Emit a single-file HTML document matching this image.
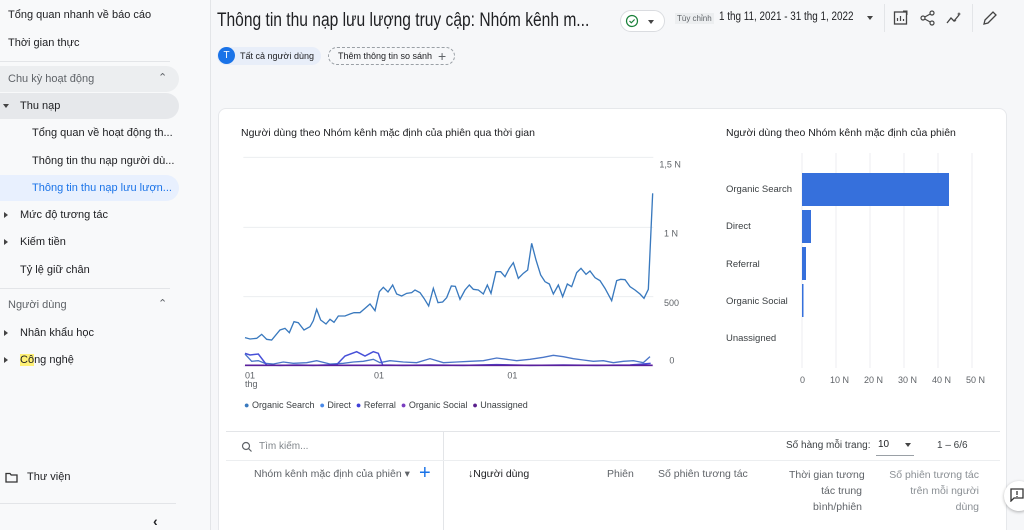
<!DOCTYPE html>
<html><head><meta charset="utf-8"><style>
*{margin:0;padding:0;box-sizing:border-box}
html,body{width:1024px;height:530px;overflow:hidden}
body{background:#f6f7f9;font-family:"Liberation Sans","Noto Sans CJK SC",sans-serif;color:#202124;position:relative}
.abs{position:absolute;white-space:nowrap}
.sb{position:absolute;left:0;top:0;width:211px;height:530px;background:#f8f9fa;border-right:1px solid #e3e5e8}
.si{position:absolute;font-size:11px;color:#202124;white-space:nowrap}
.hl{position:absolute;left:0;width:179px;height:26px;border-radius:0 13px 13px 0}
.tri{position:absolute;width:0;height:0;border-left:3px solid transparent;border-right:3px solid transparent;border-top:4px solid #444}
.tri2{position:absolute;width:0;height:0;border-top:3px solid transparent;border-bottom:3px solid transparent;border-left:4px solid #444}
.card{position:absolute;left:218px;top:108px;width:789px;height:440px;background:#fff;border:1px solid #e6e8eb;border-radius:8px}
.t{font-size:10px;color:#5f6368}
</style></head><body>
<div class="sb">
<div class="si" style="left:8px;top:9px">Tổng quan nhanh về báo cáo</div>
<div class="si" style="left:8px;top:37px">Thời gian thực</div>
<div style="position:absolute;left:0;top:61px;width:170px;border-top:1px solid #e3e5e8"></div>
<div class="hl" style="top:66px;background:#eceef0"></div>
<div class="si" style="left:8px;top:73px;color:#5f6368">Chu kỳ hoạt động</div>
<div class="si" style="left:158px;top:71px;color:#5f6368;font-size:11px">&#8963;</div>
<div class="hl" style="top:93px;background:#e6e8eb"></div>
<div class="tri" style="left:3px;top:104px"></div>
<div class="si" style="left:20px;top:100px">Thu nạp</div>
<div class="si" style="left:32px;top:127px">Tổng quan về hoạt động th...</div>
<div class="si" style="left:32px;top:155px">Thông tin thu nạp người dù...</div>
<div class="hl" style="top:175px;background:#e8f0fe"></div>
<div class="si" style="left:32px;top:182px;color:#1a73e8">Thông tin thu nạp lưu lượn...</div>
<div class="tri2" style="left:4px;top:212px"></div>
<div class="si" style="left:20px;top:209px">Mức độ tương tác</div>
<div class="tri2" style="left:4px;top:239px"></div>
<div class="si" style="left:20px;top:236px">Kiếm tiền</div>
<div class="si" style="left:20px;top:264px">Tỷ lệ giữ chân</div>
<div style="position:absolute;left:0;top:288px;width:170px;border-top:1px solid #e3e5e8"></div>
<div class="si" style="left:8px;top:299px;color:#5f6368">Người dùng</div>
<div class="si" style="left:158px;top:297px;color:#5f6368;font-size:11px">&#8963;</div>
<div class="tri2" style="left:4px;top:330px"></div>
<div class="si" style="left:20px;top:327px">Nhân khẩu học</div>
<div class="tri2" style="left:4px;top:357px"></div>
<div class="si" style="left:20px;top:354px"><span style="background:#fff176">Cô</span>ng nghệ</div>
<svg style="position:absolute;left:5px;top:472px" width="13" height="11"><path d="M1 1.5h4l1.2 1.5H12v7H1z" fill="none" stroke="#333" stroke-width="1.3"/></svg>
<div class="si" style="left:27px;top:471px">Thư viện</div>
<div style="position:absolute;left:0;top:503px;width:176px;border-top:1px solid #e3e5e8"></div>
<div class="si" style="left:153px;top:513px;font-size:14px;font-weight:bold">&lsaquo;</div>
</div>

<div class="abs" style="left:217px;top:10px;font-size:19px;color:#202124;transform:scaleX(0.82);transform-origin:0 0">Thông tin thu nạp lưu lượng truy cập: Nhóm kênh m...</div>
<div class="abs" style="left:620px;top:10px;width:45px;height:22px;border:1px solid #dadce0;border-radius:11px;background:#fff"></div>
<svg class="abs" style="left:625px;top:14px" width="14" height="14"><circle cx="7" cy="7" r="5.5" fill="none" stroke="#188038" stroke-width="1.2"/><path d="M4.5 7l1.8 1.8 3.3-3.3" fill="none" stroke="#188038" stroke-width="1.2"/></svg>
<div class="tri" style="left:648px;top:20px"></div>
<div class="abs" style="left:675px;top:13px;font-size:8px;color:#5f6368;background:#eceef0;padding:1px 2px">Tùy chỉnh</div>
<div class="abs" style="left:719px;top:11px;font-size:11.5px;transform:scaleX(0.86);transform-origin:0 0">1 thg 11, 2021 - 31 thg 1, 2022</div>
<div class="tri" style="left:867px;top:16px"></div>
<div style="position:absolute;left:884px;top:4px;height:28px;border-left:1px solid #e3e5e8"></div>
<svg class="abs" style="left:893px;top:10px" width="16" height="16"><rect x="1.5" y="2" width="12" height="12" fill="none" stroke="#444" stroke-width="1.3"/><path d="M4.5 11V8M7.5 11V6M10.5 11V9" stroke="#444" stroke-width="1.2"/><path d="M10 1l4 0 0 4" fill="none" stroke="#444" stroke-width="1"/></svg>
<svg class="abs" style="left:920px;top:10px" width="16" height="16"><circle cx="12" cy="3" r="2" fill="none" stroke="#444" stroke-width="1.2"/><circle cx="3" cy="8" r="2" fill="none" stroke="#444" stroke-width="1.2"/><circle cx="12" cy="13" r="2" fill="none" stroke="#444" stroke-width="1.2"/><path d="M4.8 7l5.4-3M4.8 9l5.4 3" stroke="#444" stroke-width="1.2"/></svg>
<svg class="abs" style="left:946px;top:10px" width="18" height="16"><path d="M1 13l4-5 3 3 5-6" fill="none" stroke="#444" stroke-width="1.3"/><path d="M13 2l.6 1.4 1.4.6-1.4.6-.6 1.4-.6-1.4-1.4-.6 1.4-.6z M9 9l.5 1 1 .5-1 .5-.5 1-.5-1-1-.5 1-.5z" fill="#444"/></svg>
<div style="position:absolute;left:972px;top:4px;height:28px;border-left:1px solid #e3e5e8"></div>
<svg class="abs" style="left:982px;top:10px" width="16" height="16"><path d="M2 14l1-4 8-8 3 3-8 8z" fill="none" stroke="#444" stroke-width="1.3"/></svg>

<div class="abs" style="left:217px;top:47px;width:104px;height:18px;background:#e8eef9;border-radius:9px"></div>
<div class="abs" style="left:218px;top:47px;width:17px;height:17px;border-radius:50%;background:#1a73e8;color:#fff;font-size:10px;text-align:center;line-height:17px">T</div>
<div class="abs" style="left:240px;top:51px;font-size:9px">Tất cả người dùng</div>
<div class="abs" style="left:328px;top:47px;width:127px;height:18px;border:1px dashed #9aa0a6;border-radius:9px"></div>
<div class="abs" style="left:338px;top:51px;font-size:9px">Thêm thông tin so sánh</div>
<div class="abs" style="left:438px;top:47px;font-size:14px;color:#5f6368;line-height:18px">+</div>

<div class="card"></div>
<div class="abs" style="left:241px;top:127px;font-size:10.5px">Người dùng theo Nhóm kênh mặc định của phiên qua thời gian</div>
<div class="abs" style="left:726px;top:127px;font-size:10.5px">Người dùng theo Nhóm kênh mặc định của phiên</div>

<svg style="position:absolute;left:230px;top:150px" width="460" height="230" viewBox="0 0 1380 690">
<g stroke="#eceef0" stroke-width="3"><line x1="40" y1="22" x2="1270" y2="22"/><line x1="40" y1="232" x2="1270" y2="232"/><line x1="40" y1="440" x2="1270" y2="440"/><line x1="40" y1="648" x2="1270" y2="648"/></g>
<g fill="#5f6368" font-family="Liberation Sans" font-size="27"><text x="1288" y="52">1,5 N</text><text x="1302" y="260">1 N</text><text x="1302" y="468">500</text><text x="1318" y="640">0</text></g>
<polyline fill="none" stroke="#4a76c8" stroke-width="4" points="45,612 65,634 85,632 105,640 130,642 160,636 190,640 230,638 260,632 300,642 340,640 370,636 400,634 430,628 450,638 480,632 520,636 560,638 600,626 640,638 680,636 720,634 760,632 800,624 830,628 860,632 900,628 940,622 970,616 1000,620 1030,626 1060,630 1090,634 1120,632 1150,638 1180,634 1210,632 1240,638 1260,620"/>
<polyline fill="none" stroke="#4750d8" stroke-width="4.5" points="45,610 60,615 85,612 110,645 150,646 200,645 250,646 320,644 345,618 380,605 405,618 430,605 445,610 458,645 520,646 600,645 700,646 800,644 900,646 1000,645 1100,646 1200,645 1262,640"/>
<polyline fill="none" stroke="#3979be" stroke-width="4" points="45,563 60,567 80,565 95,553 110,568 125,570 150,540 165,535 178,548 192,515 205,518 222,540 240,530 250,512 260,478 272,510 288,522 300,508 312,517 325,498 345,498 360,492 372,488 390,488 405,475 420,462 435,482 448,425 460,412 474,426 488,405 500,432 515,438 530,430 545,428 555,420 570,428 582,445 596,468 610,415 624,458 638,456 650,443 664,408 676,409 690,448 705,420 718,405 730,418 745,420 760,432 772,405 783,430 798,365 812,365 825,380 838,355 850,338 865,385 880,370 893,360 905,280 918,330 932,375 945,395 958,402 970,432 985,405 998,440 1012,402 1025,410 1040,368 1053,355 1068,373 1080,363 1095,383 1110,392 1125,415 1145,452 1160,392 1172,388 1185,389 1200,410 1215,420 1230,432 1242,445 1255,418 1268,130"/>
<line x1="45" y1="646" x2="1268" y2="646" stroke="#5a1f9c" stroke-width="5"/>
<g fill="#5f6368" font-family="Liberation Sans" font-size="27"><text x="45" y="685">01</text><text x="432" y="685">01</text><text x="832" y="685">01</text></g>
</svg>
<div class="abs t" style="left:245px;top:379px;font-size:9px">thg</div>

<div class="abs" style="left:244px;top:400px;font-size:9px;color:#3c4043">
<span style="color:#3979be">●</span> Organic Search &nbsp;<span style="color:#4a8ae8">●</span> Direct &nbsp;<span style="color:#4040d8">●</span> Referral &nbsp;<span style="color:#7a3ec0">●</span> Organic Social &nbsp;<span style="color:#5a1f8c">●</span> Unassigned</div>

<svg style="position:absolute;left:700px;top:140px" width="300" height="250">
<g stroke="#eceef0" stroke-width="1"><line x1="102" y1="13" x2="102" y2="228"/><line x1="136" y1="13" x2="136" y2="228"/><line x1="170" y1="13" x2="170" y2="228"/><line x1="204" y1="13" x2="204" y2="228"/><line x1="238" y1="13" x2="238" y2="228"/><line x1="272" y1="13" x2="272" y2="228"/></g>
<rect x="102" y="33" width="147" height="33" fill="#3670dc"/>
<rect x="102" y="70" width="9" height="33" fill="#3670dc"/>
<rect x="102" y="107" width="4" height="33" fill="#3670dc"/>
<rect x="102" y="144" width="1.5" height="33" fill="#3670dc"/>
<g font-family="Liberation Sans" font-size="9.5" fill="#3c4043"><text x="26" y="52">Organic Search</text><text x="26" y="89">Direct</text><text x="26" y="127">Referral</text><text x="26" y="164">Organic Social</text><text x="26" y="201">Unassigned</text></g>
<g font-family="Liberation Sans" font-size="9" fill="#5f6368"><text x="100" y="243">0</text><text x="130" y="243">10 N</text><text x="164" y="243">20 N</text><text x="198" y="243">30 N</text><text x="232" y="243">40 N</text><text x="266" y="243">50 N</text></g>
</svg>

<div style="position:absolute;left:226px;top:431px;width:774px;border-top:1px solid #e3e5e8"></div>
<div style="position:absolute;left:443px;top:431px;height:99px;border-left:1px solid #e3e5e8"></div>
<div style="position:absolute;left:226px;top:460px;width:774px;border-top:1px solid #eceef0"></div>
<svg class="abs" style="left:241px;top:441px" width="12" height="12"><circle cx="5" cy="5" r="3.5" fill="none" stroke="#5f6368" stroke-width="1.2"/><path d="M7.5 7.5l3 3" stroke="#5f6368" stroke-width="1.2"/></svg>
<div class="abs t" style="left:259px;top:441px;color:#80868b">Tìm kiếm...</div>
<div class="abs t" style="left:786px;top:440px;color:#3c4043">Số hàng mỗi trang:</div>
<div class="abs t" style="left:878px;top:439px;color:#202124">10</div>
<div class="tri" style="left:905px;top:443px"></div>
<div style="position:absolute;left:876px;top:455px;width:38px;border-top:1px solid #9aa0a6"></div>
<div class="abs t" style="left:937px;top:440px;color:#3c4043">1 – 6/6</div>
<div class="abs t" style="left:254px;top:468px;font-size:10.5px">Nhóm kênh mặc định của phiên ▾</div>
<div class="abs" style="left:419px;top:462px;font-size:20px;color:#1a73e8;font-weight:300">+</div>
<div class="abs" style="left:468px;top:468px;font-size:10.5px;color:#202124">↓Người dùng</div>
<div class="abs t" style="left:607px;top:468px;font-size:10.5px">Phiên</div>
<div class="abs t" style="left:658px;top:468px;font-size:10.5px">Số phiên tương tác</div>
<div class="abs t" style="left:789px;top:467px;font-size:10.5px;text-align:right;line-height:16px;width:73px">Thời gian tương<br>tác trung<br>bình/phiên</div>
<div class="abs t" style="left:887px;top:467px;font-size:10.5px;text-align:right;line-height:16px;width:92px;color:#8a8f94">Số phiên tương tác<br>trên mỗi người<br>dùng</div>
<div class="abs" style="left:1004px;top:481px;width:30px;height:30px;border-radius:50%;background:#fff;box-shadow:0 1px 3px rgba(0,0,0,.3)"></div>
<svg class="abs" style="left:1010px;top:488px" width="14" height="14"><path d="M1 1h12v9H4l-3 3z" fill="none" stroke="#333" stroke-width="1.3"/><path d="M7 3v4M7 8v1" stroke="#333" stroke-width="1.3"/></svg>
</body></html>
